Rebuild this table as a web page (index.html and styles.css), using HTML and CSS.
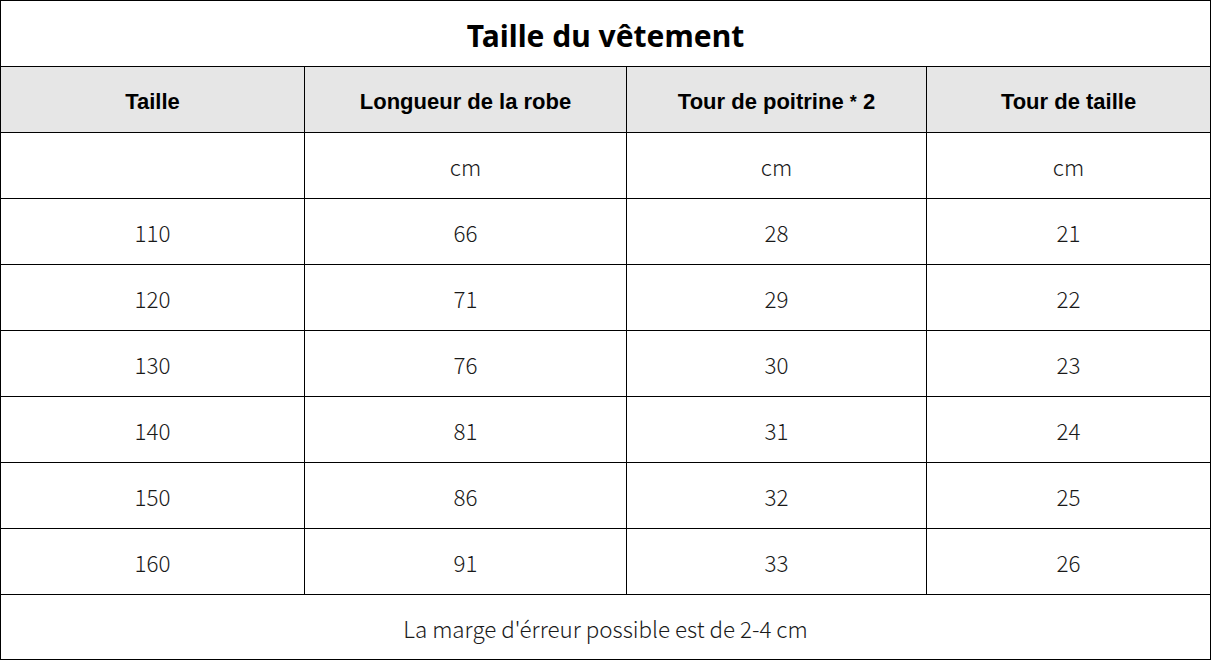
FILE: index.html
```html
<!DOCTYPE html>
<html lang="fr">
<head>
<meta charset="utf-8">
<title>Taille du vêtement</title>
<link rel="stylesheet" href="styles.css">
</head>
<body>
<table class="size-table">
  <colgroup>
    <col class="c1"><col class="c2"><col class="c3"><col class="c4">
  </colgroup>
  <tr><th colspan="4" class="title">Taille du vêtement</th></tr>
  <tr class="head">
    <th>Taille</th><th>Longueur de la robe</th><th>Tour de poitrine <span class="star">*</span> 2</th><th>Tour de taille</th>
  </tr>
  <tr><td></td><td>cm</td><td>cm</td><td>cm</td></tr>
  <tr><td>110</td><td>66</td><td>28</td><td>21</td></tr>
  <tr><td>120</td><td>71</td><td>29</td><td>22</td></tr>
  <tr><td>130</td><td>76</td><td>30</td><td>23</td></tr>
  <tr><td>140</td><td>81</td><td>31</td><td>24</td></tr>
  <tr><td>150</td><td>86</td><td>32</td><td>25</td></tr>
  <tr><td>160</td><td>91</td><td>33</td><td>26</td></tr>
  <tr><td colspan="4" class="note">La marge d'érreur possible est de 2-4 cm</td></tr>
</table>
</body>
</html>
```
FILE: styles.css
```css
html, body {
  margin: 0;
  padding: 0;
  background: #fff;
}
.size-table {
  border-collapse: collapse;
  width: 1210px;
  table-layout: fixed;
  color: #1a1a1a;
}
.c1 { width: 304px; }
.c2 { width: 322px; }
.c3 { width: 300px; }
.c4 { width: 284px; }
.size-table th,
.size-table td {
  border: 1px solid #000;
  padding: 2px 0 0 0;
  height: 63px;
  text-align: center;
  vertical-align: middle;
  font-family: "Noto Sans CJK SC", "Noto Sans", sans-serif;
  font-size: 22.4px;
  font-weight: 300;
  line-height: 1;
}
.size-table th.title {
  font-family: "Noto Sans", "Open Sans", sans-serif;
  font-size: 30px;
  font-weight: 700;
  color: #000;
  background: #fff;
  padding-top: 4px;
  height: 61px;
}
.head th {
  background: #e6e6e6;
  font-family: "Liberation Sans", Arial, sans-serif;
  font-size: 22px;
  font-weight: 700;
  color: #000;
  padding-top: 5px;
  height: 60px;
}
.star {
  font-size: 18px;
  vertical-align: 1px;
}
.size-table td.note {
  height: 62px;
}
```
